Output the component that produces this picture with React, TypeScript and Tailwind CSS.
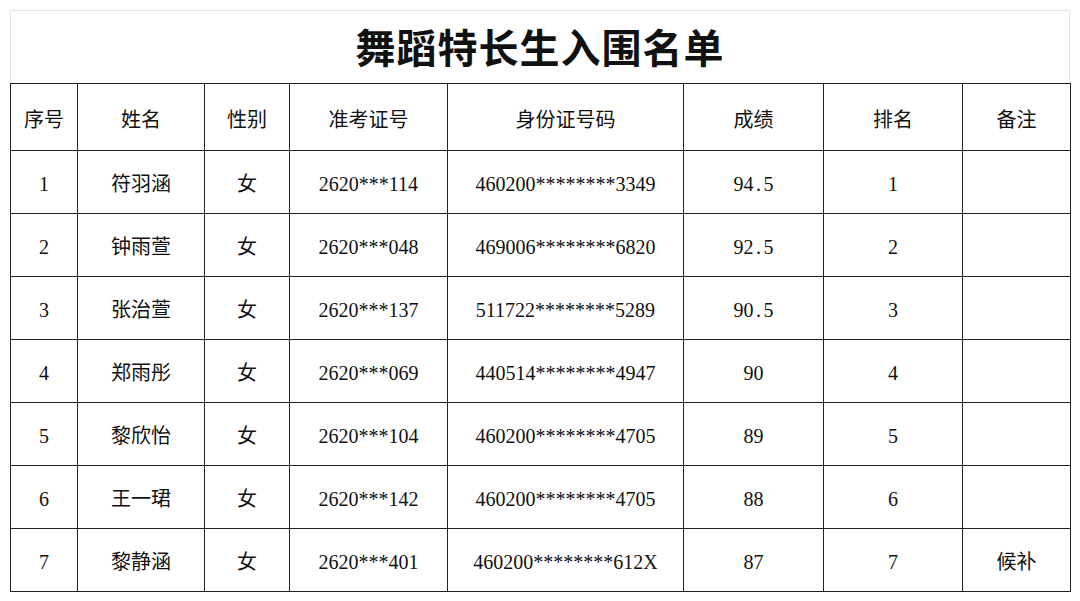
const headers = ['序号', '姓名', '性别', '准考证号', '身份证号码', '成绩', '排名', '备注'];
const widths = ['w-[67px]', 'w-[127px]', 'w-[85px]', 'w-[158px]', 'w-[236px]', 'w-[140px]', 'w-[139px]', 'w-[108px]'];

const rows = [
  ['1', '符羽涵', '女', '2620***114', '460200********3349', '94.5', '1', ''],
  ['2', '钟雨萱', '女', '2620***048', '469006********6820', '92.5', '2', ''],
  ['3', '张治萱', '女', '2620***137', '511722********5289', '90.5', '3', ''],
  ['4', '郑雨彤', '女', '2620***069', '440514********4947', '90', '4', ''],
  ['5', '黎欣怡', '女', '2620***104', '460200********4705', '89', '5', ''],
  ['6', '王一珺', '女', '2620***142', '460200********4705', '88', '6', ''],
  ['7', '黎静涵', '女', '2620***401', '460200********612X', '87', '7', '候补'],
];

// scores use a half-width period like the original sheet font
const Score = ({ v }: { v: string }) => {
  const [a, b] = v.split('.');
  if (b === undefined) return <>{v}</>;
  return (
    <>
      {a}
      <span className="inline-block w-[10px]">.</span>
      {b}
    </>
  );
};

const App = () => {
  return (
    <div className="w-[1080px] h-[601px] bg-white p-[10px] text-[#111] font-['Liberation_Serif','Noto_Sans_CJK_SC',serif]">
      <div className="h-[73px] border border-b-0 border-[#e4e4e4] flex items-center justify-center">
        <h1 className="text-[40px] font-semibold tracking-[1px] leading-none font-['Noto_Sans_CJK_SC',serif] -mt-[2px]">
          舞蹈特长生入围名单
        </h1>
      </div>
      <table className="w-[1060px] table-fixed border-collapse text-[20px]">
        <colgroup>
          {widths.map((w, i) => (
            <col key={i} className={w} />
          ))}
        </colgroup>
        <thead>
          <tr className="h-[67px]">
            {headers.map((h) => (
              <th key={h} className="border-[1.5px] border-[#222] font-normal text-center align-middle pt-[4px] font-['Noto_Sans_CJK_SC',serif]">
                {h}
              </th>
            ))}
          </tr>
        </thead>
        <tbody>
          {rows.map((r) => (
            <tr key={r[0]} className="h-[63px]">
              {r.map((c, i) => (
                <td key={i} className="border-[1.5px] border-[#222] text-center align-middle pt-[4px]">
                  {i === 5 ? <Score v={c} /> : c}
                </td>
              ))}
            </tr>
          ))}
        </tbody>
      </table>
    </div>
  );
};

export default App;
